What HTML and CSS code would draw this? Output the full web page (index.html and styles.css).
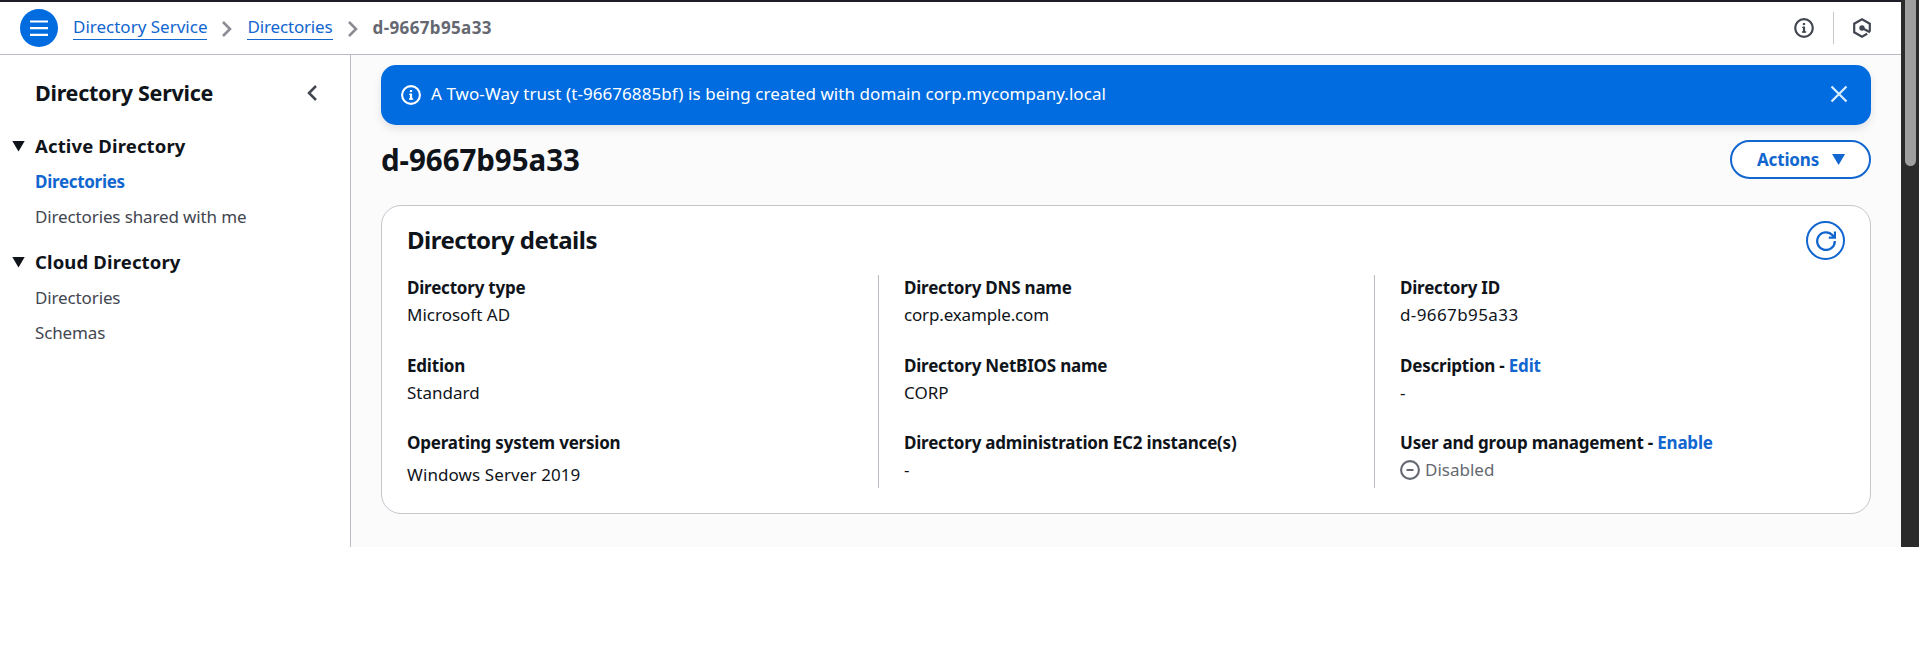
FILE: index.html
```html
<!DOCTYPE html>
<html lang="en">
<head>
<meta charset="utf-8">
<title>Directory Service</title>
<link rel="stylesheet" href="styles.css">
</head>
<body>
<div class="window">
  <div class="app">
    <header class="topbar">
      <button class="menu" aria-label="Menu"><svg width="38" height="38" viewBox="0 0 38 38"><path d="M10 12.5h18M10 19.2h18M10 25.8h18" stroke="#fff" stroke-width="2.2"/></svg></button>
      <nav class="crumbs">
        <a class="crumb">Directory Service</a>
        <svg class="sep" width="12" height="18" viewBox="0 0 12 18"><path d="M2 2l7 7-7 7" fill="none" stroke="#8c8c94" stroke-width="2.6"/></svg>
        <a class="crumb tight">Directories</a>
        <svg class="sep" width="12" height="18" viewBox="0 0 12 18"><path d="M2 2l7 7-7 7" fill="none" stroke="#8c8c94" stroke-width="2.6"/></svg>
        <b class="here">d-9667b95a33</b>
      </nav>
      <div class="tools">
        <svg width="20" height="20" viewBox="0 0 20 20"><circle cx="10" cy="10" r="8.8" fill="none" stroke="#424650" stroke-width="2.2"/><path d="M10 8.6v6" fill="none" stroke="#424650" stroke-width="2.2"/><path d="M8.2 9.4h2M8 14h4.2" stroke="#424650" stroke-width="1.4"/><rect x="8.9" y="5" width="2.2" height="2.1" fill="#424650"/></svg>
        <i class="rule"></i>
        <svg width="18" height="20" viewBox="0 0 18 20"><path d="M16.8 13.6V5.7L9 1.3 1.2 5.7v8.6L9 18.7l5.2-2.9" fill="none" stroke="#424650" stroke-width="2.2"/><circle cx="9" cy="10" r="2.7" fill="#424650"/><path d="M9 10l8 4.3" stroke="#424650" stroke-width="2.2"/></svg>
      </div>
    </header>
    <div class="body">
      <aside class="side">
        <div class="side-head"><h2>Directory Service</h2><svg width="12" height="18" viewBox="0 0 12 18"><path d="M10 2L3 9l7 7" fill="none" stroke="#424650" stroke-width="2.5"/></svg></div>
        <h3><i class="tri"></i>Active Directory</h3>
        <a class="link on">Directories</a>
        <a class="link">Directories shared with me</a>
        <h3 class="second"><i class="tri"></i>Cloud Directory</h3>
        <a class="link">Directories</a>
        <a class="link">Schemas</a>
      </aside>
      <main class="main">
        <div class="flash">
          <svg width="20" height="20" viewBox="0 0 20 20"><circle cx="10" cy="10" r="8.9" fill="none" stroke="#fff" stroke-width="2.1"/><path d="M10 8.6v6" fill="none" stroke="#fff" stroke-width="2.2"/><path d="M8.2 9.4h2M8 14h4.2" stroke="#fff" stroke-width="1.4"/><rect x="8.9" y="5" width="2.2" height="2.1" fill="#fff"/></svg>
          <p>A Two-Way trust (t-96676885bf) is being created with domain corp.mycompany.local</p>
          <svg class="close" width="18" height="18" viewBox="0 0 18 18"><path d="M1.5 1.5l15 15M16.5 1.5l-15 15" stroke="#d9ecff" stroke-width="2.3"/></svg>
        </div>
        <div class="title"><h1>d-9667b95a33</h1><button class="actions"><span>Actions</span><i class="tri"></i></button></div>
        <section class="card">
          <div class="card-head"><h2>Directory details</h2><button class="refresh" aria-label="Refresh"><svg width="20" height="20" viewBox="0 0 20 20"><path d="M18.8 10A8.8 8.8 0 1 1 16.6 4.3L19 6.5M19 .5v6.2h-6.2" fill="none" stroke="#1166cf" stroke-width="2.3"/></svg></button></div>
          <div class="grid">
            <dl>
              <div><dt>Directory type</dt><dd>Microsoft AD</dd></div>
              <div><dt>Edition</dt><dd>Standard</dd></div>
              <div><dt>Operating system version</dt><dd class="low">Windows Server 2019</dd></div>
            </dl>
            <dl>
              <div><dt>Directory DNS name</dt><dd class="tight">corp.example.com</dd></div>
              <div><dt>Directory NetBIOS name</dt><dd>CORP</dd></div>
              <div><dt>Directory administration EC2 instance(s)</dt><dd>-</dd></div>
            </dl>
            <dl>
              <div><dt>Directory ID</dt><dd class="id">d-9667b95a33</dd></div>
              <div><dt>Description - <a>Edit</a></dt><dd>-</dd></div>
              <div><dt>User and group management - <a>Enable</a></dt><dd class="off"><svg width="20" height="20" viewBox="0 0 20 20"><circle cx="10" cy="10" r="8.9" fill="none" stroke="#656871" stroke-width="2.1"/><path d="M6.5 10h7" stroke="#656871" stroke-width="2"/></svg><span>Disabled</span></dd></div>
            </dl>
          </div>
        </section>
      </main>
    </div>
  </div>
  <div class="scroll"><div class="thumb"></div></div>
</div>
</body>
</html>
```
FILE: styles.css
```css
* { box-sizing: border-box; }
body { margin: 0; background: #fff; color: #0f141a; font: 17px/27px "Noto Sans", "Open Sans", sans-serif; }
h1, h2, h3, p, dl, dd { margin: 0; }
button { padding: 0; font: inherit; }
svg { display: block; flex: none; }
.window { display: flex; height: 547px; }
.app { flex: 1; display: flex; flex-direction: column; }
.scroll { width: 18px; background: #2b2b2b; padding-left: 4px; }
.thumb { width: 11px; height: 166px; background: #9f9f9f; border-radius: 0 0 6px 6px; }

.topbar { height: 55px; flex: none; border-top: 2px solid #201c28; border-bottom: 1px solid #b9bcc2; display: flex; align-items: center; padding: 0 30px 0 20px; }
.menu { width: 38px; height: 38px; border: 0; border-radius: 50%; background: #006ce0; }
.crumbs { display: flex; align-items: center; margin-left: 15px; }
.crumb { color: #1166cf; border-bottom: 1px solid #1166cf; line-height: 22px; padding-bottom: 1px; margin-top: -1px; }
.sep { margin: 1px 14px 0; }
.tight { letter-spacing: -.16px; }
.here { color: #656871; font-weight: 700; margin-top: -2px; letter-spacing: .37px; }
.tools { margin-left: auto; display: flex; align-items: center; }
.rule { width: 1px; height: 32px; background: #c6c6cd; margin: 0 19px; }

.body { flex: 1; display: flex; }
.side { width: 351px; border-right: 1px solid #b9bcc2; }
.side-head { display: flex; align-items: center; justify-content: space-between; padding: 23px 32px 0 35px; }
.side h2 { font-size: 21.5px; line-height: 30px; font-weight: 700; letter-spacing: -.25px; }
.side-head svg { margin-top: -1px; }
h3 { display: flex; align-items: center; font-size: 18.5px; line-height: 30px; font-weight: 700; letter-spacing: .14px; padding-left: 12px; margin: 23px 0 3px; }
h3.second { margin-top: 13px; }
.tri { width: 13px; height: 11px; background: currentColor; clip-path: polygon(0 0, 100% 0, 50% 100%); }
h3 .tri { margin-right: 10px; }
.link { display: block; padding-left: 35px; line-height: 35px; color: #424650; letter-spacing: -.13px; }
.link.on { color: #1166cf; font-weight: 700; letter-spacing: -.3px; }

.main { flex: 1; background: #fbfbfc; padding: 10px 30px 0; }
.flash { height: 60px; border-radius: 15px; background: #006ce0; color: #fff; display: flex; align-items: center; padding: 0 23px 0 20px; box-shadow: 0 4px 8px rgba(0, 7, 22, .1); }
.flash p { margin: -3px 0 0 10px; letter-spacing: .065px; }
.close { margin: -2px 0 0 auto; }
.title { display: flex; align-items: center; justify-content: space-between; margin-top: 15px; }
h1 { font-size: 29.5px; line-height: 39px; font-weight: 700; letter-spacing: -.05px; }
.actions { width: 141px; height: 39px; border: 2px solid #1166cf; border-radius: 20px; background: #fff; color: #1166cf; font-weight: 700; letter-spacing: -.15px; display: flex; align-items: center; justify-content: center; gap: 13px; padding-left: 1px; }
.actions span { margin-top: -1px; }
.card { height: 309px; margin-top: 26px; border: 1px solid #c6c6cd; border-radius: 20px; background: #fff; padding: 15px 25px 0; }
.card-head { display: flex; justify-content: space-between; align-items: center; }
.card h2 { font-size: 24px; line-height: 37px; margin-bottom: 2px; font-weight: 700; letter-spacing: -.5px; }
.refresh { width: 39px; height: 39px; border: 2px solid #1166cf; border-radius: 50%; background: #fff; display: flex; align-items: center; justify-content: center; }
.grid { display: grid; grid-template-columns: 471px 496px 1fr; height: 213px; margin-top: 15px; }
dl { display: flex; flex-direction: column; gap: 23.5px; }
dl + dl { border-left: 1px solid #b9bcc2; padding-left: 25px; }
dl > div { height: 54px; }
dt { font-weight: 700; line-height: 25px; padding-bottom: 1px; letter-spacing: -.21px; }
dt a { color: #1166cf; }
.id { letter-spacing: .4px; }
.low { padding-top: 5px; letter-spacing: .1px; }
.off { display: flex; align-items: center; gap: 5px; color: #656871; }
```
